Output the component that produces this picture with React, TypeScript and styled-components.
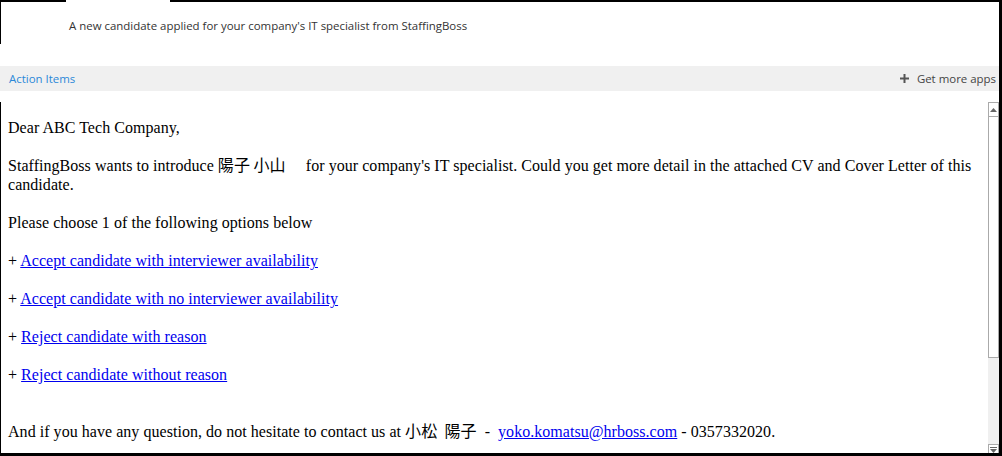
import React from "react";
import styled, { createGlobalStyle } from "styled-components";

const Global = createGlobalStyle`
  html, body { margin: 0; padding: 0; background: #fff; }
  body { font-family: "Open Sans", "Noto Sans", sans-serif; }
`;

const Frame = styled.div`
  position: relative;
  width: 1002px;
  height: 456px;
  box-sizing: border-box;
  border-right: 3px solid #000;
  border-bottom: 3px solid #000;
  display: flex;
  flex-direction: column;
  overflow: hidden;
  background: #fff;
`;

const TopEdge = styled.div`
  display: flex;
  height: 2px;
  flex: none;
`;

const EdgePiece = styled.div<{ $w?: number; $on?: boolean }>`
  height: 2px;
  width: ${(p) => (p.$w ? `${p.$w}px` : "auto")};
  flex: ${(p) => (p.$w ? "none" : "1")};
  background: ${(p) => (p.$on ? "#000" : "#fff")};
`;

const Header = styled.div`
  height: 64px;
  flex: none;
  display: flex;
  align-items: flex-start;
  padding: 15px 0 0 68px;
  box-sizing: border-box;
  border-left: 1px solid #000;
  border-image: linear-gradient(to bottom, #000 0, #000 42px, transparent 42px) 1;
  border-top: 0;
  border-right: 0;
  border-bottom: 0;
`;

const Subject = styled.div`
  font-family: "Open Sans", "Noto Sans", sans-serif;
  font-size: 11.45px;
  color: #333;
  line-height: 18px;
`;

const ActionBar = styled.div`
  height: 25px;
  flex: none;
  background: #f0f0f0;
  display: flex;
  align-items: center;
  justify-content: space-between;
  padding: 0 3px 0 9px;
  font-size: 11.45px;
`;

const ActionLink = styled.span`
  color: #2b88d8;
`;

const MoreApps = styled.span`
  color: #444;
  display: flex;
  align-items: center;
  gap: 8px;
`;

const Body = styled.div`
  flex: 1;
  display: flex;
  margin-top: 11px;
  min-height: 0;
  border-left: 1px solid #000;
`;

const Content = styled.div`
  flex: 1;
  padding: 16px 0 0 7px;
  font-family: "Liberation Serif", "Times New Roman", "Noto Sans CJK JP", serif;
  font-size: 16px;
  line-height: 19px;
  letter-spacing: 0.04px;
  color: #000;
  overflow: hidden;
`;

const Para = styled.p`
  margin: 0 0 19px 0;
`;

const Jp = styled.span`
  font-family: "Noto Sans CJK JP", sans-serif;
  font-size: 16px;
  line-height: 0;
`;

const Link = styled.a`
  color: #0000ee;
  text-decoration: underline;
`;

const Scrollbar = styled.div`
  width: 11px;
  flex: none;
  display: flex;
  flex-direction: column;
  background: #f0f0f0;
`;

const ArrowBox = styled.div<{ $bottom?: boolean }>`
  height: ${(p) => (p.$bottom ? 9 : 15)}px;
  box-sizing: border-box;
  border: 1px solid #aaa;
  border-bottom: ${(p) => (p.$bottom ? "0" : "1px solid #aaa")};
  background: #fff;
  display: flex;
  align-items: ${(p) => (p.$bottom ? "flex-end" : "center")};
  justify-content: center;
  flex: none;
`;

const Thumb = styled.div`
  height: 241px;
  box-sizing: border-box;
  border: 1px solid #aaa;
  border-top: 0;
  background: #fff;
  flex: none;
`;

const Track = styled.div`
  flex: 1;
`;

export default function App() {
  return (
    <>
      <Global />
      <Frame>
        <TopEdge>
          <EdgePiece $w={66} $on />
          <EdgePiece $w={104} />
          <EdgePiece $on />
        </TopEdge>
        <Header>
          <Subject>A new candidate applied for your company's IT specialist from StaffingBoss</Subject>
        </Header>
        <ActionBar>
          <ActionLink>Action Items</ActionLink>
          <MoreApps>
            <svg width="9" height="9" viewBox="0 0 9 9">
              <path d="M3.5 0h2v3.5H9v2H5.5V9h-2V5.5H0v-2h3.5z" fill="#555" />
            </svg>
            Get more apps
          </MoreApps>
        </ActionBar>
        <Body>
          <Content>
            <Para>Dear ABC Tech Company,</Para>
            <Para>
              StaffingBoss wants to introduce <Jp>陽子 小山</Jp>{"\u00a0\u00a0\u00a0\u00a0 "}for your company's IT specialist. Could
              you get more detail in the attached CV and Cover Letter of this candidate.
            </Para>
            <Para>Please choose 1 of the following options below</Para>
            <Para>
              + <Link href="#">Accept candidate with interviewer availability</Link>
            </Para>
            <Para>
              + <Link href="#">Accept candidate with no interviewer availability</Link>
            </Para>
            <Para>
              + <Link href="#">Reject candidate with reason</Link>
            </Para>
            <Para>
              + <Link href="#">Reject candidate without reason</Link>
            </Para>
            <Para>
              <br />
              And if you have any question, do not hesitate to contact us at <Jp>小松{"\u00a0\u00a0"}陽子</Jp>{"\u00a0 -\u00a0 "}
              <Link href="#">yoko.komatsu@hrboss.com</Link> - 0357332020.
            </Para>
          </Content>
          <Scrollbar>
            <ArrowBox>
              <svg width="7" height="4" viewBox="0 0 7 4">
                <path d="M0 4L3.5 0L7 4z" fill="#666" />
              </svg>
            </ArrowBox>
            <Thumb />
            <Track />
            <ArrowBox $bottom>
              <svg width="7" height="6" viewBox="0 0 7 6">
                <path d="M0 0h7v1H0zM0 2L3.5 6L7 2z" fill="#666" />
              </svg>
            </ArrowBox>
          </Scrollbar>
        </Body>
      </Frame>
    </>
  );
}
